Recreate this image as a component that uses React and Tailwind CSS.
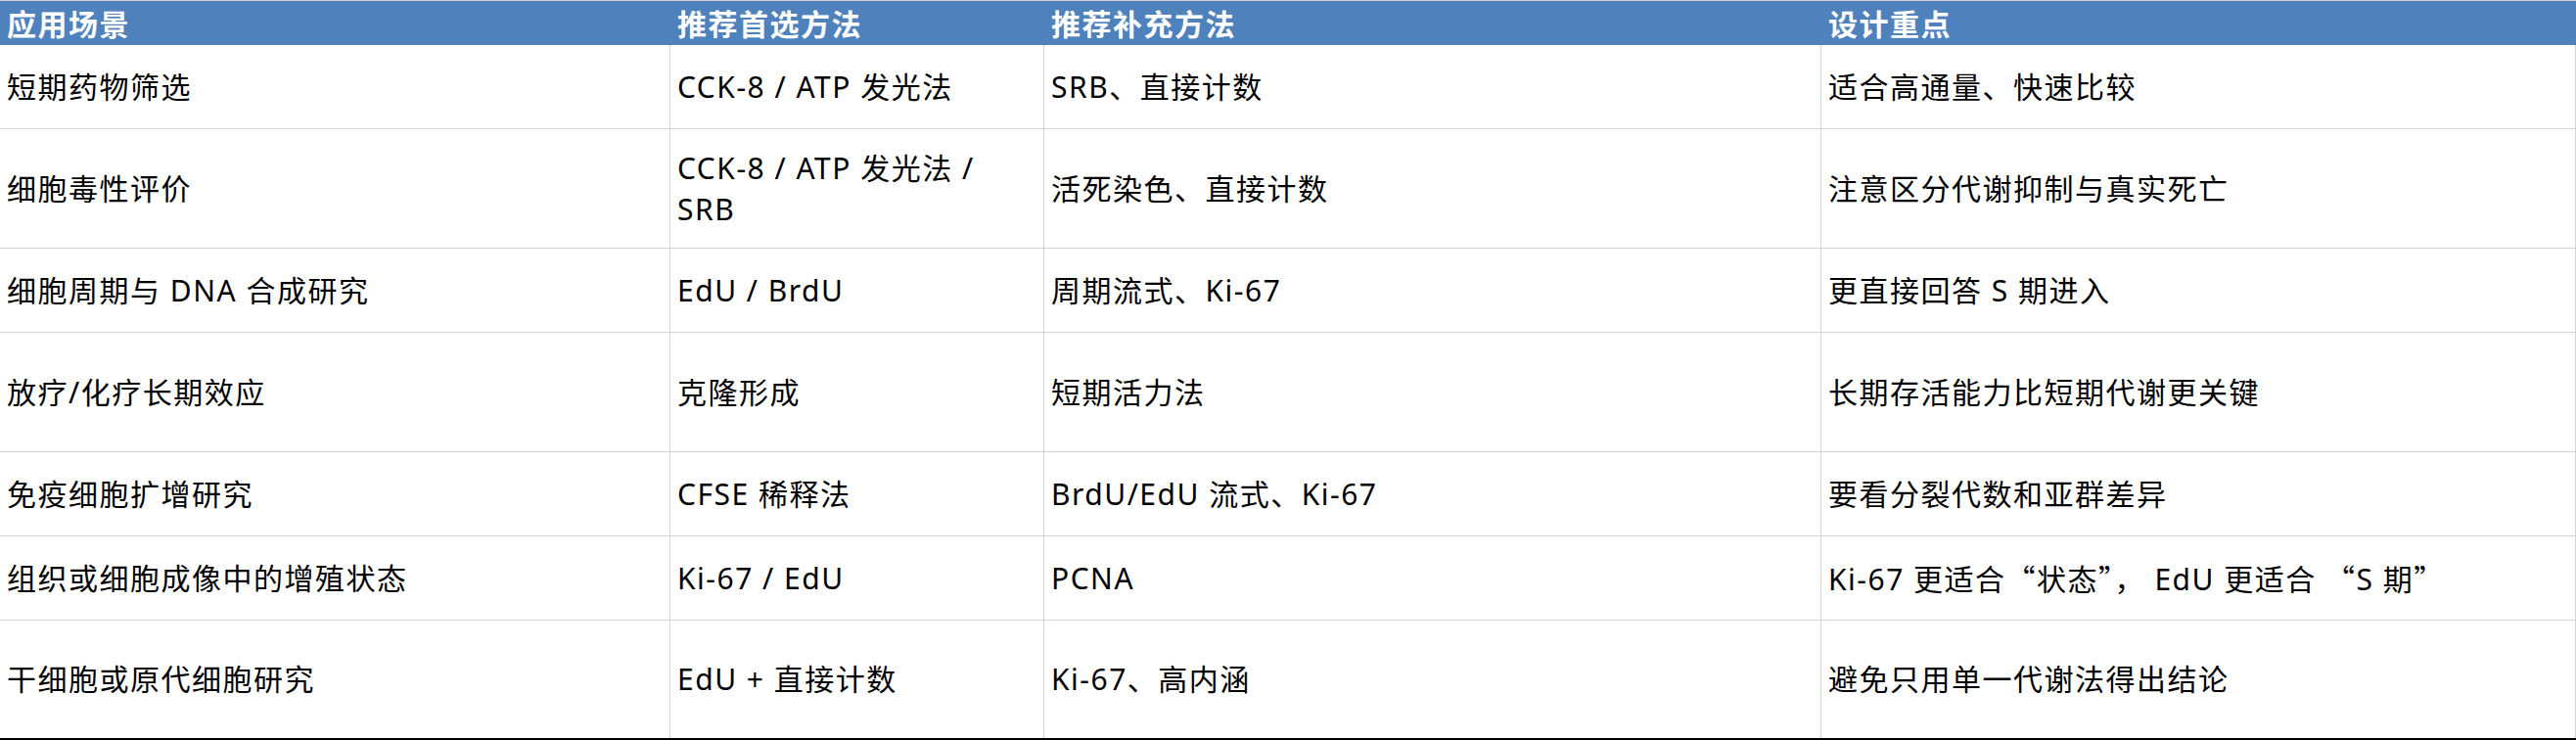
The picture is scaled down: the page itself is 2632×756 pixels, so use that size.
const font = { fontFamily: '"Noto Sans", "Noto Sans CJK SC", sans-serif' };

const rows = [
  { h: "h-[86px]", cells: ["短期药物筛选", "CCK-8 / ATP 发光法", "SRB、直接计数", "适合高通量、快速比较"] },
  {
    h: "h-[122px]",
    cells: [
      "细胞毒性评价",
      <>
        CCK-8 / ATP 发光法 /<br />
        SRB
      </>,
      "活死染色、直接计数",
      "注意区分代谢抑制与真实死亡",
    ],
  },
  { h: "h-[86px]", cells: ["细胞周期与 DNA 合成研究", "EdU / BrdU", "周期流式、Ki-67", "更直接回答 S 期进入"] },
  { h: "h-[122px]", cells: ["放疗/化疗长期效应", "克隆形成", "短期活力法", "长期存活能力比短期代谢更关键"] },
  { h: "h-[86px]", cells: ["免疫细胞扩增研究", "CFSE 稀释法", "BrdU/EdU 流式、Ki-67", "要看分裂代数和亚群差异"] },
  {
    h: "h-[86px]",
    cells: [
      "组织或细胞成像中的增殖状态",
      "Ki-67 / EdU",
      "PCNA",
      <>
        Ki-67 更适合<span className="font-['Noto_Sans_CJK_SC']">“</span>状态
        <span className="font-['Noto_Sans_CJK_SC']">”，</span> EdU 更适合{" "}
        <span className="font-['Noto_Sans_CJK_SC']">“</span>S 期
        <span className="font-['Noto_Sans_CJK_SC']">”</span>
      </>,
    ],
  },
  { h: "h-[120px]", cells: ["干细胞或原代细胞研究", "EdU + 直接计数", "Ki-67、高内涵", "避免只用单一代谢法得出结论"] },
];

const headers = ["应用场景", "推荐首选方法", "推荐补充方法", "设计重点"];
const cols = "grid grid-cols-[685px_382px_794px_771px]";

export default function App() {
  return (
    <div className="w-[2632px] h-[756px] bg-white text-black overflow-hidden" style={font}>
      <div className="border-t border-[#d4d4d4]">
        <div className={`${cols} h-[45px] bg-[#4f81bd] text-white font-bold`}>
          {headers.map((t) => (
            <div key={t} className="flex items-center pl-[7px] pt-[3px] text-[30px] leading-none tracking-[1.5px]">
              {t}
            </div>
          ))}
        </div>
        {rows.map((r, i) => (
          <div
            key={i}
            className={`${cols} ${r.h} ${i === rows.length - 1 ? "" : "border-b border-[#d4d4d4]"}`}
          >
            {r.cells.map((c, j) => (
              <div
                key={j}
                className="flex items-center border-r border-[#d4d4d4] pl-[7px] text-[30px] leading-[42px] tracking-[1.5px]"
              >
                <div>{c}</div>
              </div>
            ))}
          </div>
        ))}
        <div className="h-[2px] bg-black" />
      </div>
    </div>
  );
}
